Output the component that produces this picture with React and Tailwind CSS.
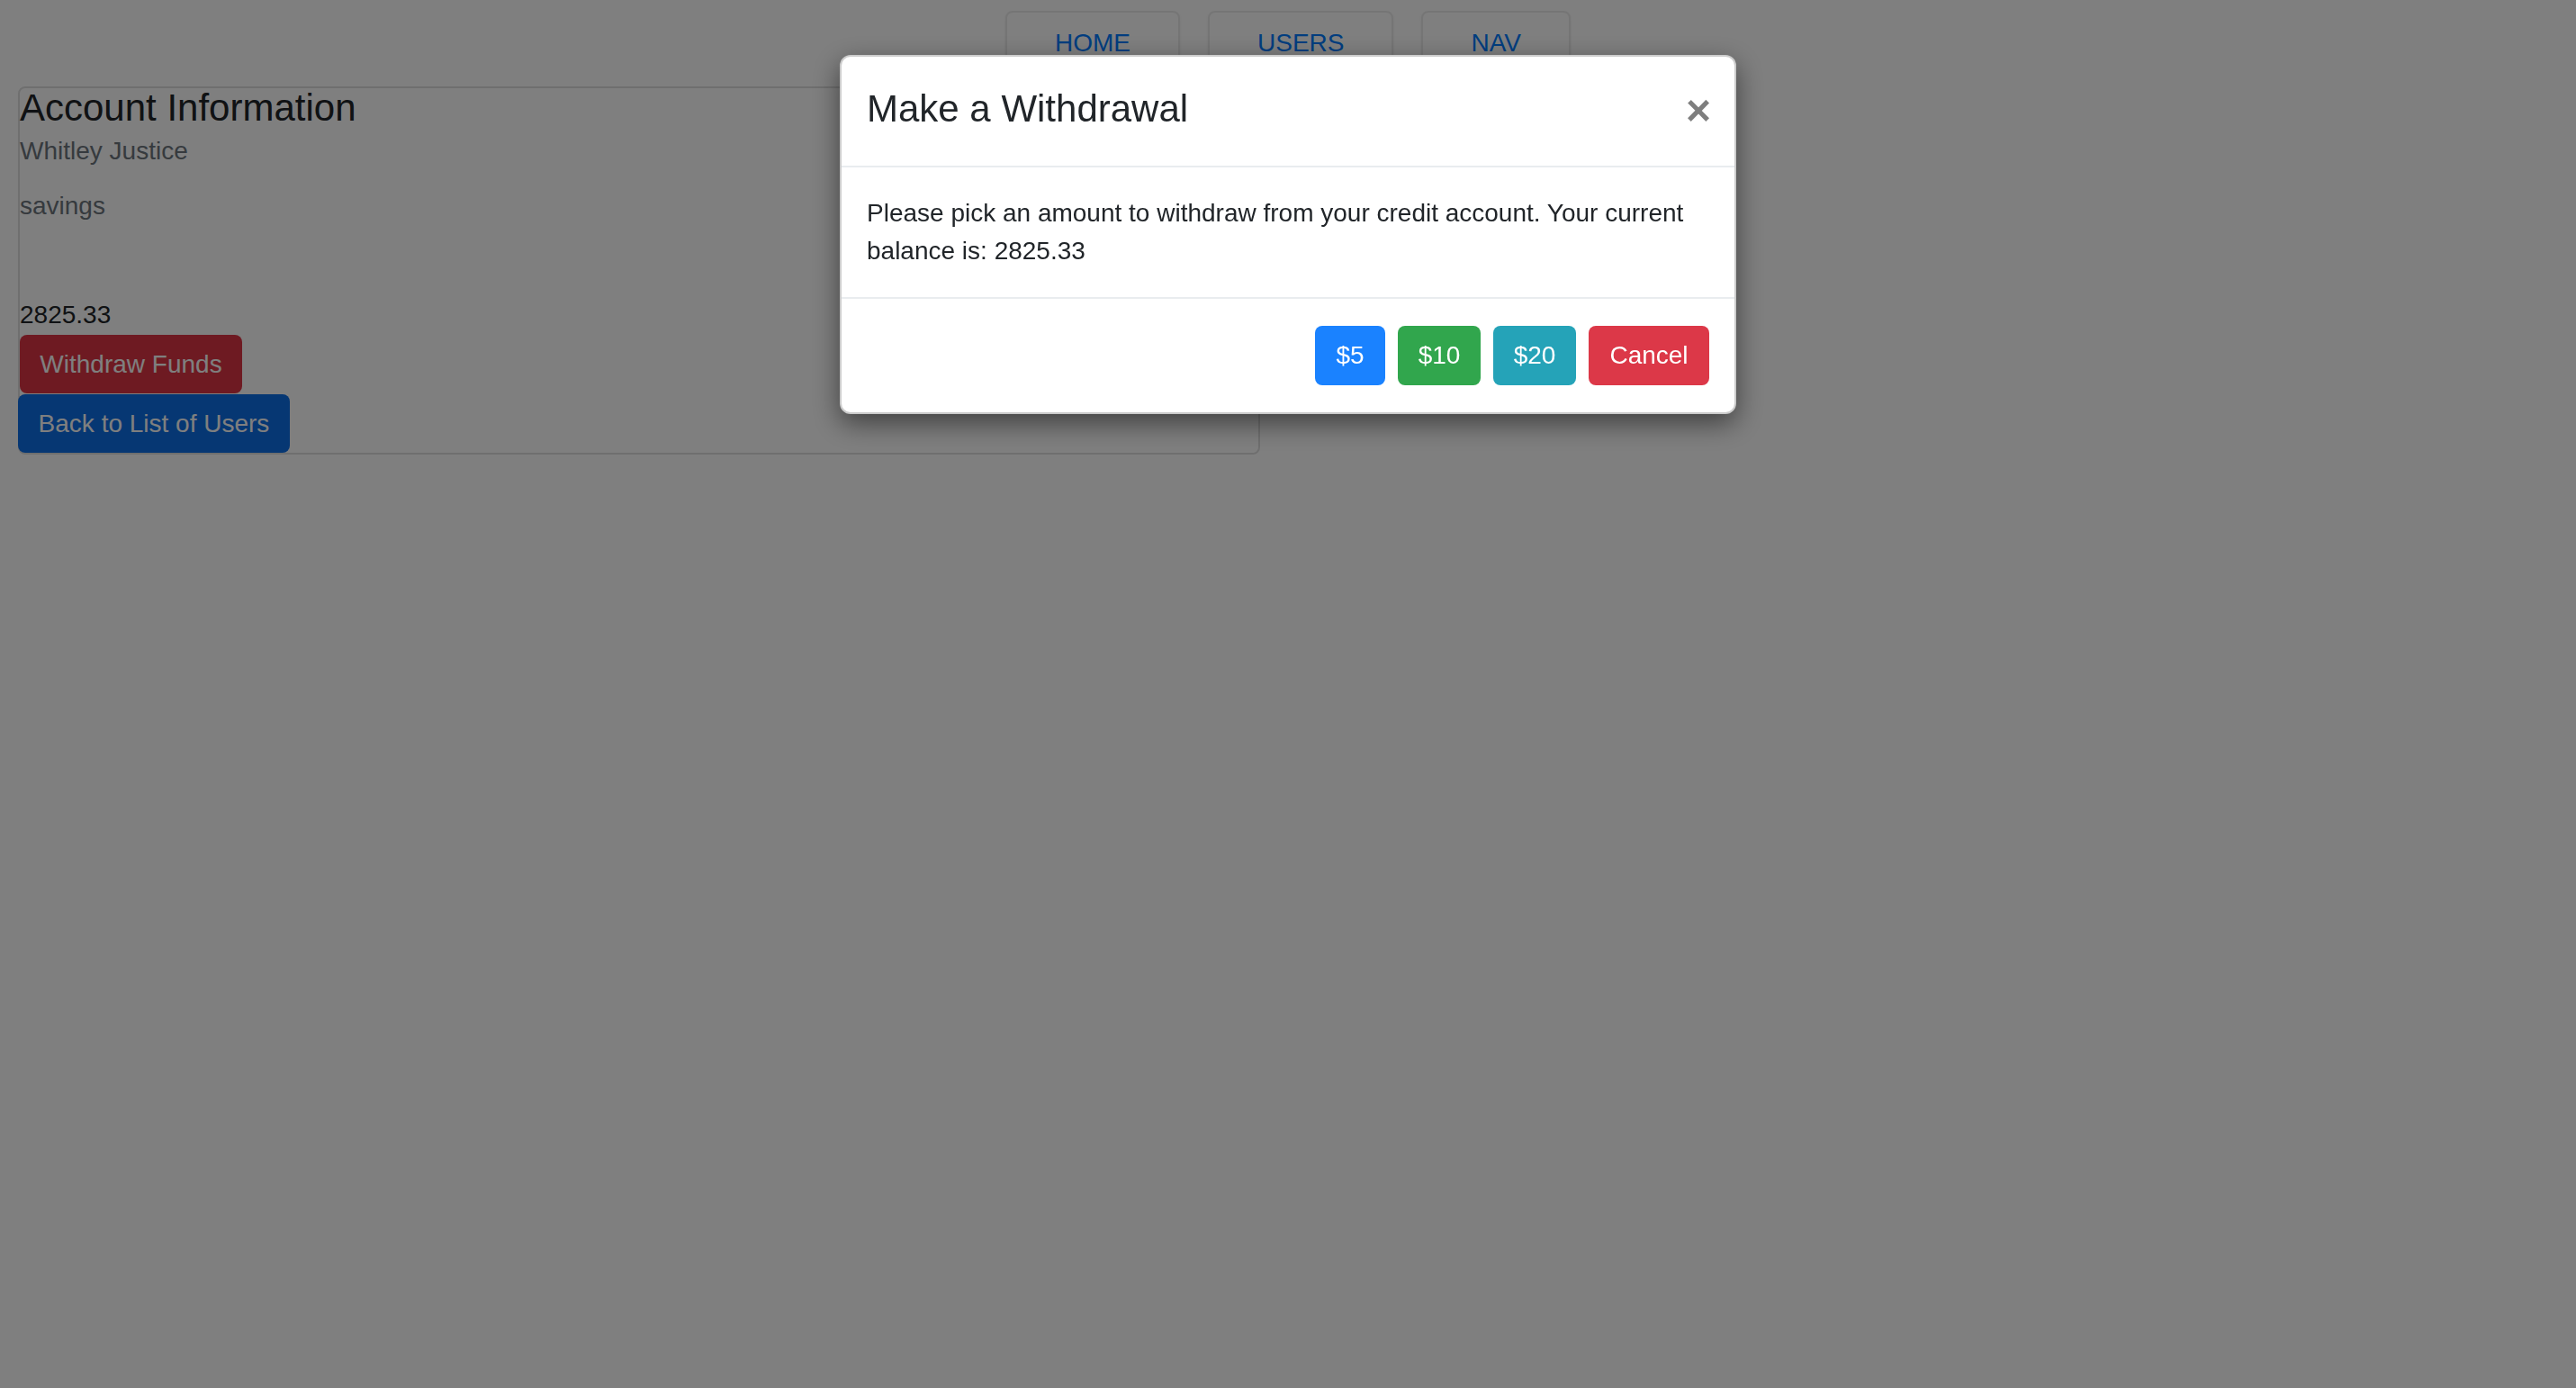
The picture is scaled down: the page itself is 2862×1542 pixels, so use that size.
import React from "react";

const font = { fontFamily: '"Liberation Sans", Arial, Helvetica, sans-serif' };

function Tab({ label }) {
  return (
    <div className="bg-white border-2 border-[#ebebeb] rounded-[8px] shadow-[0_2px_4px_rgba(0,0,0,0.06)] px-[53px] pt-[13px] pb-[16px] text-[28px] leading-[42px] text-[#007bff]">
      {label}
    </div>
  );
}

export default function App() {
  return (
    <div className="relative min-h-screen w-full bg-white text-[#212529]" style={font}>
      <nav className="flex justify-center gap-[31px] pt-[12px]">
        <Tab label="HOME" />
        <Tab label="USERS" />
        <Tab label="NAV" />
      </nav>

      <div className="ml-[20px] mt-[9px] w-[1380px] border-2 border-[#dfdfdf] rounded-[8px] flex flex-col items-start">
        <h5 className="text-[42px] leading-[44px] font-normal text-[#212529]">Account Information</h5>
        <div className="mt-[5px] text-[28px] leading-[42px] text-[#6c757d]">Whitley Justice</div>
        <div className="mt-[19px] text-[28px] leading-[42px] text-[#6c757d]">savings</div>
        <div className="mt-[79px] text-[28px] leading-[42px] text-[#212529]">2825.33</div>
        <button className="mt-[1px] w-[247px] h-[65px] flex items-center justify-center bg-[#dc3545] text-white text-[28px] rounded-[8px]">
          Withdraw Funds
        </button>
        <button className="mt-[1px] -ml-[2px] w-[302px] h-[65px] flex items-center justify-center bg-[#0d6ee6] text-white text-[28px] rounded-[8px]">
          Back to List of Users
        </button>
      </div>

      <div className="fixed inset-0 bg-black/50 z-10" />

      <div className="fixed z-20 top-[61px] left-1/2 -translate-x-1/2 w-[996px] bg-white border-2 border-black/20 rounded-[12px] shadow-[0_10px_30px_rgba(0,0,0,0.5)]">
        <div className="flex items-center justify-between pl-[28px] pr-[26px] pt-[28px] pb-[33px] border-b-2 border-[#e9ecef]">
          <h4 className="text-[42px] leading-[60px] font-normal text-[#212529]">Make a Withdrawal</h4>
          <span className="text-[48px] leading-[60px] h-[60px] font-bold text-black opacity-50 translate-y-[2px]">×</span>
        </div>
        <div className="px-[28px] pt-[30px] pb-[30px] text-[28px] leading-[42px] text-[#212529] border-b-2 border-[#e9ecef]">
          Please pick an amount to withdraw from your credit account. Your current balance is: 2825.33
        </div>
        <div className="flex justify-end gap-[14px] px-[28px] pt-[30px] pb-[30px]">
          <button className="w-[78px] h-[66px] flex items-center justify-center bg-[#1a82ff] text-white text-[28px] rounded-[8px]">$5</button>
          <button className="w-[92px] h-[66px] flex items-center justify-center bg-[#31a64d] text-white text-[28px] rounded-[8px]">$10</button>
          <button className="w-[92px] h-[66px] flex items-center justify-center bg-[#25a3b8] text-white text-[28px] rounded-[8px]">$20</button>
          <button className="w-[134px] h-[66px] flex items-center justify-center bg-[#dc3848] text-white text-[28px] rounded-[8px]">Cancel</button>
        </div>
      </div>
    </div>
  );
}
